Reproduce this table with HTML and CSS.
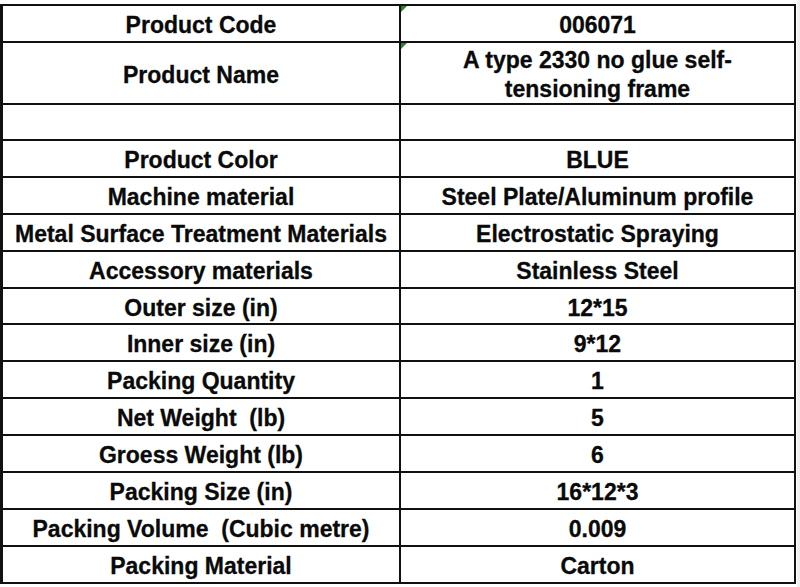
FILE: index.html
```html
<!DOCTYPE html>
<html>
<head>
<meta charset="utf-8">
<link rel="stylesheet" href="styles.css">
</head>
<body>
<div class="sheet">
  <div class="cell">Product Code</div>
  <div class="cell val flag">006071</div>
  <div class="cell">Product Name</div>
  <div class="cell val flag two">A type 2330 no glue self-<br>tensioning frame</div>
  <div class="cell"></div>
  <div class="cell val"></div>
  <div class="cell">Product Color</div>
  <div class="cell val">BLUE</div>
  <div class="cell">Machine material</div>
  <div class="cell val">Steel Plate/Aluminum profile</div>
  <div class="cell">Metal Surface Treatment Materials</div>
  <div class="cell val">Electrostatic Spraying</div>
  <div class="cell">Accessory materials</div>
  <div class="cell val">Stainless Steel</div>
  <div class="cell">Outer size (in)</div>
  <div class="cell val">12*15</div>
  <div class="cell">Inner size (in)</div>
  <div class="cell val">9*12</div>
  <div class="cell">Packing Quantity</div>
  <div class="cell val">1</div>
  <div class="cell">Net Weight &nbsp;(lb)</div>
  <div class="cell val">5</div>
  <div class="cell">Groess Weight (lb)</div>
  <div class="cell val">6</div>
  <div class="cell">Packing Size (in)</div>
  <div class="cell val">16*12*3</div>
  <div class="cell">Packing Volume &nbsp;(Cubic metre)</div>
  <div class="cell val">0.009</div>
  <div class="cell">Packing Material</div>
  <div class="cell val">Carton</div>
</div>
</body>
</html>
```

FILE: styles.css
```css
html {
  background: linear-gradient(to right, #ffffff 797px, #efefef 797px);
}
body {
  margin: 0;
  padding-top: 4px;
  font-family: "Liberation Sans", Arial, sans-serif;
  font-weight: bold;
  font-size: 23px;
  color: #0a0a0a;
  -webkit-text-stroke: 0.3px #0a0a0a;
}
.sheet {
  display: grid;
  grid-template-columns: 398px 395px;
  grid-template-rows: 37px 62px 36px repeat(12, 36.9px);
  width: 796px;
  box-sizing: border-box;
  border-top: 2px solid #111;
  border-left: 3px solid #111;
  background: #fff;
}
.cell {
  position: relative;
  box-sizing: border-box;
  border-right: 2px solid #111;
  border-bottom: 2px solid #111;
  display: flex;
  align-items: center;
  justify-content: center;
  text-align: center;
  line-height: 29px;
  padding-top: 4px;
}
.two {
  padding-top: 4px;
}
.flag::before {
  content: "";
  position: absolute;
  top: 0;
  left: 0;
  width: 0;
  height: 0;
  border-top: 6px solid #2f7f2f;
  border-right: 6px solid transparent;
}
```
